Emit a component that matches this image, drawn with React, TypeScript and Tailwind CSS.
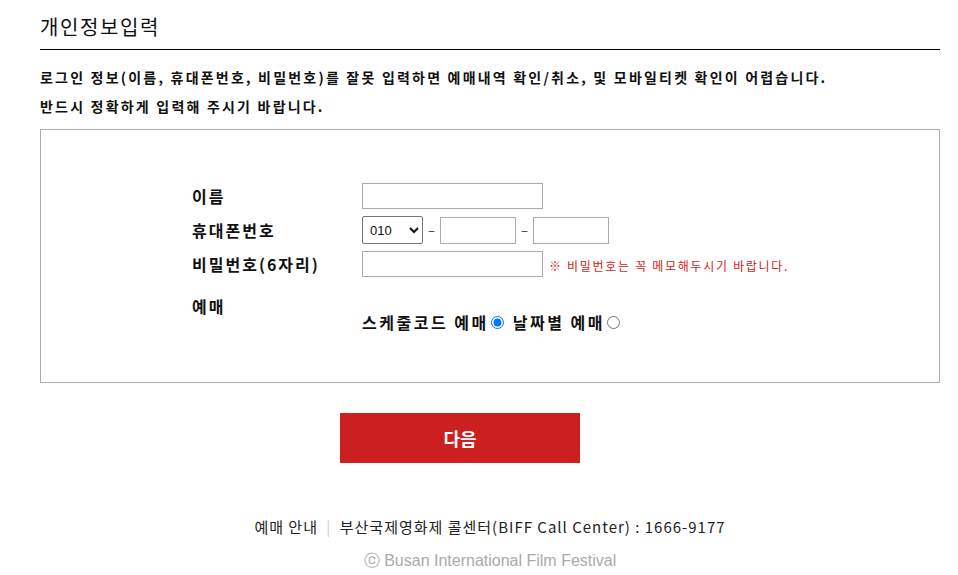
import { useState } from 'react';

const App = () => {
  const [mode, setMode] = useState('schedule');

  return (
    <div className="w-[958px] min-h-[575px] bg-white text-[#111] font-['Noto_Sans_CJK_KR','Noto_Sans',sans-serif]">
      <div className="mx-[40px] w-[900px]">
        {/* title */}
        <h2 className="pt-[14px] pb-[9px] text-[20px] tracking-[1.6px] leading-[26px] font-normal border-b border-black">
          개인정보입력
        </h2>

        <div className="pt-[13px] text-[14px] font-bold leading-[29px] tracking-[2.2px]">
          <p>로그인 정보(이름, 휴대폰번호, 비밀번호)를 잘못 입력하면 예매내역 확인/취소, 및 모바일티켓 확인이 어렵습니다.</p>
          <p>반드시 정확하게 입력해 주시기 바랍니다.</p>
        </div>

        {/* form box */}
        <div className="mt-[8px] h-[254px] border border-[#aaa] pt-[53px] pl-[151px]">
          <div className="grid grid-cols-[170px_1fr] gap-y-[7px] text-[16px] tracking-[2px] font-bold">
            <div className="flex items-center h-[26px]">이름</div>
            <div className="flex items-center">
              <input type="text" className="w-[181px] h-[26px] border border-[#aaa] px-1 outline-none" />
            </div>

            <div className="flex items-center h-[28px]">휴대폰번호</div>
            <div className="flex items-center font-normal text-[13px] tracking-normal">
              <select className="w-[61px] h-[28px] border border-[#767676] rounded-[2px] pl-[3px] text-[13px] font-['Liberation_Sans',sans-serif]">
                <option>010</option>
                <option>011</option>
                <option>016</option>
                <option>017</option>
              </select>
              <span className="mx-[5px] text-[#333]">–</span>
              <input type="text" className="w-[76px] h-[27px] border border-[#aaa] px-1 outline-none" />
              <span className="mx-[5px] text-[#333]">–</span>
              <input type="text" className="w-[76px] h-[27px] border border-[#aaa] px-1 outline-none" />
            </div>

            <div className="flex items-center h-[26px]">비밀번호(6자리)</div>
            <div className="flex items-center">
              <input type="password" className="w-[181px] h-[26px] border border-[#aaa] px-1 outline-none" />
              <span className="ml-[6px] mt-[3px] text-[12px] tracking-[1.7px] font-normal text-[#d61a1a]">※ 비밀번호는 꼭 메모해두시기 바랍니다.</span>
            </div>

            <div className="pt-[11px] leading-[22px]">예매</div>
            <div className="pt-[26px] flex items-center tracking-[2.5px]">
              <span>스케줄코드 예매</span>
              <input
                type="radio"
                name="mode"
                checked={mode === 'schedule'}
                onChange={() => setMode('schedule')}
                className="w-[13px] h-[13px] accent-[#0075ff] ml-[2px] mr-[9px]"
              />
              <span>날짜별 예매</span>
              <input
                type="radio"
                name="mode"
                checked={mode === 'date'}
                onChange={() => setMode('date')}
                className="w-[13px] h-[13px] accent-[#0075ff] ml-[2px]"
              />
            </div>
          </div>
        </div>

        <div className="mt-[30px] pl-[300px]">
          <button className="w-[240px] h-[50px] bg-[#cc1f1f] text-white text-[18px] font-bold">다음</button>
        </div>

        <div className="mt-[48px] text-center">
          <p className="text-[15px] tracking-[1px] text-[#222] leading-[32px]">
            예매 안내 <span className="mx-[4px] text-[#ccc]">|</span> 부산국제영화제 콜센터(BIFF Call Center) : 1666-9177
          </p>
          <p className="text-[16px] text-[#aaa] leading-[32px] mt-[2px] font-['Liberation_Sans',sans-serif]">ⓒ Busan International Film Festival</p>
        </div>
      </div>
    </div>
  );
};

export default App;
